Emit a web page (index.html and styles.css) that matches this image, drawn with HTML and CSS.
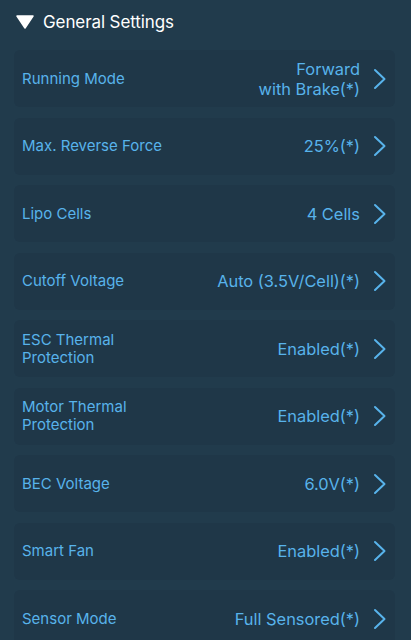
FILE: index.html
```html
<!DOCTYPE html>
<html>
<head>
<meta charset="utf-8">
<link rel="stylesheet" href="styles.css">
</head>
<body>
<div class="page">
  <div class="header">
    <svg class="tri" width="18" height="14" viewBox="0 0 18 14"><path d="M1 1 H17 L9 13 Z" fill="#fff" stroke="#fff" stroke-width="1.5" stroke-linejoin="round"/></svg>
    <span class="title">General Settings</span>
  </div>
  <div class="list">
    <div class="row"><div class="label">Running Mode</div><div class="value">Forward<br>with Brake(*)</div><svg class="chev" viewBox="0 0 14 22"><path d="M2 2 L11.5 11 L2 20" /></svg></div>
    <div class="row"><div class="label">Max. Reverse Force</div><div class="value">25%(*)</div><svg class="chev" viewBox="0 0 14 22"><path d="M2 2 L11.5 11 L2 20" /></svg></div>
    <div class="row"><div class="label">Lipo Cells</div><div class="value">4 Cells</div><svg class="chev" viewBox="0 0 14 22"><path d="M2 2 L11.5 11 L2 20" /></svg></div>
    <div class="row"><div class="label">Cutoff Voltage</div><div class="value">Auto (3.5V/Cell)(*)</div><svg class="chev" viewBox="0 0 14 22"><path d="M2 2 L11.5 11 L2 20" /></svg></div>
    <div class="row"><div class="label">ESC Thermal<br>Protection</div><div class="value">Enabled(*)</div><svg class="chev" viewBox="0 0 14 22"><path d="M2 2 L11.5 11 L2 20" /></svg></div>
    <div class="row"><div class="label">Motor Thermal<br>Protection</div><div class="value">Enabled(*)</div><svg class="chev" viewBox="0 0 14 22"><path d="M2 2 L11.5 11 L2 20" /></svg></div>
    <div class="row"><div class="label">BEC Voltage</div><div class="value">6.0V(*)</div><svg class="chev" viewBox="0 0 14 22"><path d="M2 2 L11.5 11 L2 20" /></svg></div>
    <div class="row"><div class="label">Smart Fan</div><div class="value">Enabled(*)</div><svg class="chev" viewBox="0 0 14 22"><path d="M2 2 L11.5 11 L2 20" /></svg></div>
    <div class="row"><div class="label">Sensor Mode</div><div class="value">Full Sensored(*)</div><svg class="chev" viewBox="0 0 14 22"><path d="M2 2 L11.5 11 L2 20" /></svg></div>
  </div>
</div>
</body>
</html>
```
FILE: styles.css
```css
html, body {
  margin: 0;
  padding: 0;
  background: #213b4c;
  font-family: Inter, "Noto Sans", sans-serif;
  overflow: hidden;
}
.page {
  width: 411px;
  height: 640px;
}
.header {
  display: flex;
  align-items: center;
  height: 44px;
  padding-left: 16px;
  box-sizing: border-box;
  padding-bottom: 1px;
}
.tri {
  width: 18px;
  height: 14px;
  margin-right: 9px;
}
.title {
  color: #ffffff;
  font-size: 17px;
  letter-spacing: -0.1px;
}
.list {
  display: flex;
  flex-direction: column;
  gap: 10.5px;
  margin: 6px 16px 0 14px;
}
.row {
  display: flex;
  align-items: center;
  height: 57px;
  background: #1f3748;
  border-radius: 6px;
  padding: 0 8px 0 8px;
  color: #58b3eb;
}
.label {
  flex: 1;
  font-size: 15px;
  line-height: 18px;
}
.value {
  font-size: 16.4px;
  line-height: 20px;
  text-align: right;
}
.chev {
  width: 14px;
  height: 22px;
  margin-left: 13px;
  fill: none;
  stroke: #58b3eb;
  stroke-width: 2;
  stroke-linecap: round;
  stroke-linejoin: round;
}
```
